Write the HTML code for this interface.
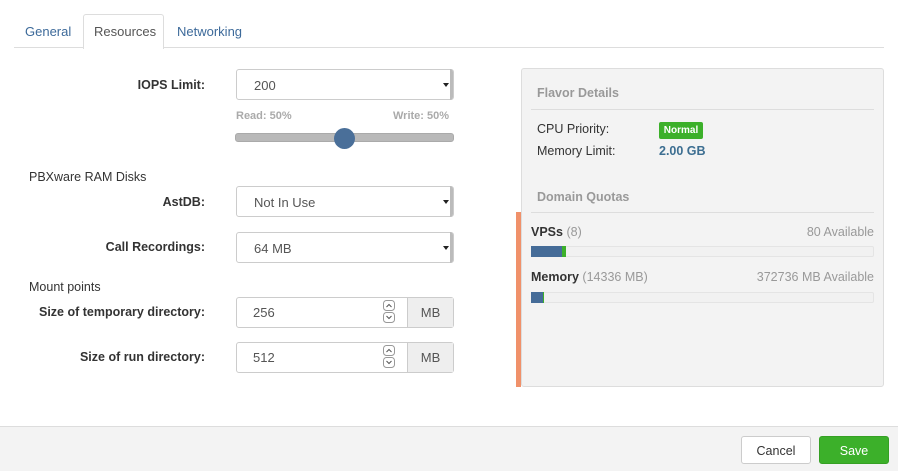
<!DOCTYPE html>
<html><head><style>
*{box-sizing:border-box;margin:0;padding:0}
body{width:898px;height:471px;background:#fff;font-family:"Liberation Sans",sans-serif;color:#333;position:relative;overflow:hidden;font-size:12.5px}
.a{position:absolute;white-space:nowrap}
.lbl{position:absolute;right:693px;font-weight:bold;font-size:12.5px;color:#333}
.sel{position:absolute;left:236px;width:218px;height:31px;border:1px solid #ccc;border-radius:3px;background:#fff;padding:8px 0 0 17px;font-size:13px;color:#555}
.sel:after{content:"";position:absolute;right:0;top:-1px;width:3px;height:31px;background:#bbb;border-radius:0 3px 3px 0}
.sel i{position:absolute;right:4px;top:13px;border-left:3px solid transparent;border-right:3px solid transparent;border-top:4px solid #222}
.inp{position:absolute;left:236px;width:218px;height:31px;border:1px solid #ccc;border-radius:3px;background:#fff;font-size:13px;color:#555}
.inp span{position:absolute;left:16px;top:7px}
.inp b{position:absolute;right:0;top:0;width:46px;height:29px;background:#eee;border-left:1px solid #ccc;font-weight:normal;text-align:center;padding-top:7px;color:#555}
.spin{position:absolute;left:146px;top:2px}
.bar{position:absolute;left:531px;width:343px;height:11px;background:#f1f1f1;border:1px solid #e4e4e4;border-radius:2px}
</style></head><body>
<div class="a" style="left:14px;top:47px;width:870px;height:1px;background:#ddd"></div>
<div class="a" style="left:83px;top:14px;width:81px;height:35px;border:1px solid #ddd;border-bottom:none;border-radius:3px 3px 0 0;background:#fff"></div>
<div class="a" style="left:25px;top:24px;color:#3d6a9a;font-size:13px">General</div>
<div class="a" style="left:94px;top:24px;color:#555;font-size:13px">Resources</div>
<div class="a" style="left:177px;top:24px;color:#3d6a9a;font-size:13px">Networking</div>

<div class="lbl" style="top:78px">IOPS Limit:</div>
<div class="sel" style="top:69px">200<i></i></div>
<div class="a" style="left:236px;top:110px;color:#aaa;font-size:11px;font-weight:bold">Read: 50%</div>
<div class="a" style="left:393px;top:110px;color:#aaa;font-size:11px;font-weight:bold">Write: 50%</div>
<div class="a" style="left:235px;top:133px;width:219px;height:9px;background:#b9b9b9;border-radius:3px;border:1px solid #aaa"></div>
<div class="a" style="left:334px;top:128px;width:21px;height:21px;border-radius:50%;background:#4a6f99"></div>

<div class="a" style="left:29px;top:170px;font-size:12.5px">PBXware RAM Disks</div>
<div class="lbl" style="top:195px">AstDB:</div>
<div class="sel" style="top:186px">Not In Use<i></i></div>
<div class="lbl" style="top:240px">Call Recordings:</div>
<div class="sel" style="top:232px">64 MB<i></i></div>
<div class="a" style="left:29px;top:280px;font-size:12.5px">Mount points</div>
<div class="lbl" style="top:305px">Size of temporary directory:</div>
<div class="inp" style="top:297px"><span>256</span><svg class="spin" width="12" height="24" viewBox="0 0 12 24"><rect x="0.5" y="0.5" width="11" height="10" rx="3" fill="none" stroke="#999"/><rect x="0.5" y="12.5" width="11" height="10" rx="3" fill="none" stroke="#999"/><path d="M3.5 7 L6 4.5 L8.5 7" fill="none" stroke="#555"/><path d="M3.5 16 L6 18.5 L8.5 16" fill="none" stroke="#555"/></svg><b>MB</b></div>
<div class="lbl" style="top:350px">Size of run directory:</div>
<div class="inp" style="top:342px"><span>512</span><svg class="spin" width="12" height="24" viewBox="0 0 12 24"><rect x="0.5" y="0.5" width="11" height="10" rx="3" fill="none" stroke="#999"/><rect x="0.5" y="12.5" width="11" height="10" rx="3" fill="none" stroke="#999"/><path d="M3.5 7 L6 4.5 L8.5 7" fill="none" stroke="#555"/><path d="M3.5 16 L6 18.5 L8.5 16" fill="none" stroke="#555"/></svg><b>MB</b></div>

<div class="a" style="left:521px;top:68px;width:363px;height:319px;background:#f3f3f3;border:1px solid #ddd;border-radius:3px"></div>
<div class="a" style="left:516px;top:212px;width:5px;height:175px;background:#f0916a"></div>
<div class="a" style="left:537px;top:86px;color:#999;font-weight:bold;font-size:12.5px">Flavor Details</div>
<div class="a" style="left:531px;top:109px;width:343px;height:1px;background:#ddd"></div>
<div class="a" style="left:537px;top:122px;font-size:12.5px">CPU Priority:</div>
<div class="a" style="left:659px;top:122px;width:44px;height:17px;background:#3cb02a;border-radius:2px;color:#fff;font-size:10px;font-weight:bold;text-align:center;padding-top:3px">Normal</div>
<div class="a" style="left:537px;top:144px;font-size:12.5px">Memory Limit:</div>
<div class="a" style="left:659px;top:144px;font-size:12.5px;font-weight:bold;color:#3c6e91">2.00 GB</div>
<div class="a" style="left:537px;top:190px;color:#999;font-weight:bold;font-size:12.5px">Domain Quotas</div>
<div class="a" style="left:531px;top:212px;width:343px;height:1px;background:#ddd"></div>
<div class="a" style="left:531px;top:225px;font-size:12.5px"><b>VPSs</b> <span style="color:#999">(8)</span></div>
<div class="a" style="right:24px;top:225px;font-size:12.5px;color:#999">80 Available</div>
<div class="bar" style="top:246px"><div style="position:absolute;left:-1px;top:-1px;width:31px;height:11px;background:#456c98"></div><div style="position:absolute;left:30px;top:-1px;width:4px;height:11px;background:#3cb02a"></div></div>
<div class="a" style="left:531px;top:270px;font-size:12.5px"><b>Memory</b> <span style="color:#999">(14336 MB)</span></div>
<div class="a" style="right:24px;top:270px;font-size:12.5px;color:#999">372736 MB Available</div>
<div class="bar" style="top:292px"><div style="position:absolute;left:-1px;top:-1px;width:12px;height:11px;background:#456c98"></div><div style="position:absolute;left:11px;top:-1px;width:1px;height:11px;background:#3cb02a"></div></div>

<div class="a" style="left:0;top:426px;width:898px;height:45px;background:#f3f3f3;border-top:1px solid #ddd"></div>
<div class="a" style="left:741px;top:436px;width:70px;height:28px;background:#fff;border:1px solid #ccc;border-radius:3px;text-align:center;padding-top:7px;font-size:12.5px">Cancel</div>
<div class="a" style="left:819px;top:436px;width:70px;height:28px;background:#3cb02a;border:1px solid #35a024;border-radius:3px;text-align:center;padding-top:7px;font-size:12.5px;color:#fff">Save</div>
</body></html>
